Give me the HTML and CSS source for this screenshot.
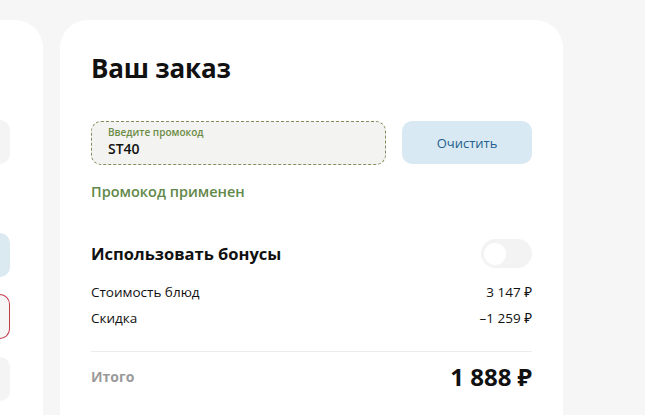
FILE: index.html
```html
<!DOCTYPE html>
<html lang="ru">
<head>
    <meta charset="UTF-8">
    <meta name="viewport" content="width=device-width, initial-scale=1.0">
    <title>Ваш заказ</title>
    <link rel="stylesheet" href="styles.css">
</head>
<body>
    <div class="page">
        <!-- левая колонка с формой доставки -->
        <aside class="side-card">
            <div class="side-field"></div>
            <div class="side-spacer"></div>
            <div class="side-field side-field-blue"></div>
            <div class="side-field side-field-error"></div>
            <div class="side-field"></div>
            <div class="side-field"></div>
        </aside>

        <section class="order-card">
            <h1 class="order-title">Ваш заказ</h1>

            <div class="promo-row">
                <label class="promo-input">
                    <span class="promo-label">Введите промокод</span>
                    <span class="promo-value">ST40</span>
                </label>
                <button class="promo-clear">Очистить</button>
            </div>
            <p class="promo-status">Промокод применен</p>

            <div class="bonus-row">
                <span class="bonus-title">Использовать бонусы</span>
                <span class="toggle"><span class="toggle-knob"></span></span>
            </div>

            <div class="summary-row">
                <span>Стоимость блюд</span>
                <span>3 147 ₽</span>
            </div>
            <div class="summary-row">
                <span>Скидка</span>
                <span>–1 259 ₽</span>
            </div>

            <div class="total-row">
                <span class="total-label">Итого</span>
                <span class="total-value">1 888 ₽</span>
            </div>
            <p class="order-note">Минимальная сумма заказа</p>
        </section>
    </div>
</body>
</html>
```

FILE: styles.css
```css
body {
    margin: 0;
    background: #f6f6f6;
    font-family: "Open Sans", "Noto Sans", sans-serif;
    color: #111;
    overflow: hidden;
}

.page {
    display: flex;
    align-items: flex-start;
    gap: 17px;
    padding-top: 20px;
    height: 395px;
}

/* Left card (only its edge is visible) */
.side-card {
    width: 43px;
    height: 460px;
    margin-left: -40px;
    padding-left: 40px;
    background: #fff;
    border-radius: 0 28px 0 0;
    display: flex;
    flex-direction: column;
    align-items: flex-start;
}

.side-field {
    flex-shrink: 0;
    width: 10px;
    height: 44px;
    margin-top: 18px;
    background: #f4f4f4;
    border-radius: 0 10px 10px 0;
    box-sizing: border-box;
}

.side-card .side-field:first-child {
    margin-top: 100px;
}

.side-spacer {
    flex-shrink: 0;
    height: 51px;
}

.side-field-blue {
    background: #dbe9f1;
}

.side-field-error {
    margin-top: 17px;
    height: 45px;
    background: #f6f6f6;
    border: 1.5px solid #c33a4a;
    border-left: none;
}

/* Order card */
.order-card {
    width: 441px;
    height: 420px;
    background: #fff;
    border-radius: 28px 28px 0 0;
    padding: 30px 31px 0;
}

.order-title {
    margin: 0;
    font-size: 26px;
    font-weight: 700;
    line-height: 36px;
    letter-spacing: -0.2px;
}

.promo-row {
    display: flex;
    gap: 16px;
    margin-top: 35px;
}

.promo-input {
    flex: 1;
    height: 44px;
    box-sizing: border-box;
    border: 1px dashed #8a8a5c;
    border-radius: 10px;
    background: #f3f3f1;
    padding: 3px 16px 0;
    display: flex;
    flex-direction: column;
}

.promo-label {
    font-size: 10px;
    line-height: 14px;
    color: #6b8c45;
    font-weight: 600;
}

.promo-value {
    font-size: 14px;
    line-height: 20px;
    font-weight: 600;
    color: #111;
}

.promo-clear {
    width: 130px;
    height: 43px;
    border: none;
    border-radius: 10px;
    background: #d9e9f3;
    color: #235f8e;
    font-family: inherit;
    font-size: 13px;
    font-weight: 500;
    cursor: pointer;
}

.promo-status {
    margin: 16px 0 0;
    font-size: 14.5px;
    line-height: 22px;
    font-weight: 600;
    color: #62884a;
}

.bonus-row {
    display: flex;
    justify-content: space-between;
    align-items: center;
    margin-top: 36px;
}

.bonus-title {
    font-size: 16.5px;
    font-weight: 700;
}

.toggle {
    width: 51px;
    height: 29px;
    border-radius: 15px;
    background: #f3f3f3;
    display: flex;
    align-items: center;
    padding: 0 3px;
    box-sizing: border-box;
}

.toggle-knob {
    width: 22px;
    height: 22px;
    border-radius: 50%;
    background: #fff;
}

.summary-row {
    display: flex;
    justify-content: space-between;
    font-size: 13.5px;
    line-height: 26px;
}

.bonus-row + .summary-row {
    margin-top: 11px;
}

.total-row {
    display: flex;
    justify-content: space-between;
    align-items: center;
    border-top: 1px solid #ececec;
    margin-top: 20px;
    padding-top: 8px;
}

.total-label {
    font-size: 14px;
    font-weight: 700;
    color: #9a9a9a;
}

.total-value {
    font-size: 24px;
    font-weight: 700;
}

.order-note {
    margin: 20px 0 0 16px;
    font-size: 13px;
    color: #d0245a;
}
```
